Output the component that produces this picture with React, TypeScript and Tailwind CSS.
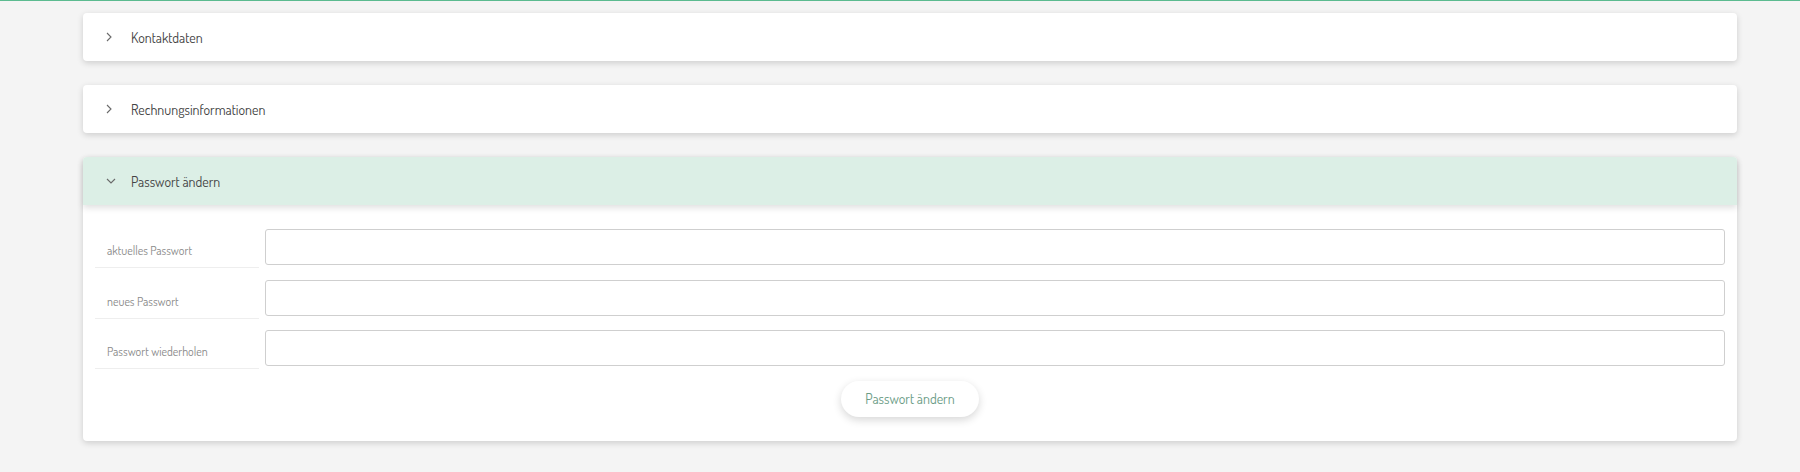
import React from "react";

const FONT = '"Dosis","Liberation Sans Narrow","Roboto Condensed","DejaVu Sans Condensed",Roboto,sans-serif';

function Chevron({ open }: { open?: boolean }) {
  return (
    <svg width="12" height="12" viewBox="0 0 12 12" className="shrink-0">
      {open ? (
        <path d="M3 4 L7 8 L11 4" fill="none" stroke="#6a6a6a" strokeWidth="1.1" />
      ) : (
        <path d="M3 2 L7 6 L3 10" fill="none" stroke="#6a6a6a" strokeWidth="1.1" />
      )}
    </svg>
  );
}

function Header({ title, open }: { title: string; open?: boolean }) {
  return (
    <div
      className={`h-[48px] flex items-center pl-[21px] rounded-t-[4px] ${
        open ? "bg-[#dcefe6] shadow-[0_3px_6px_rgba(0,0,0,0.12)] relative" : "rounded-b-[4px]"
      }`}
    >
      <Chevron open={open} />
      <span className="ml-[15px] text-[14px] text-[#444]">{title}</span>
    </div>
  );
}

function Row({ label }: { label: string }) {
  return (
    <div className="flex items-start mb-[11.5px]">
      <div className="w-[164px] h-[39px] border-b border-[#eeeeee] flex items-end pb-[7px] pl-[12px] text-[12px] text-[#8a8a8a]">
        {label}
      </div>
      <input
        type="password"
        className="ml-[6px] flex-1 h-[36px] border border-[#cfcfcf] rounded-[3px] bg-white outline-none"
      />
    </div>
  );
}

export default function App() {
  return (
    <div className="min-h-[472px] bg-[#f4f4f4] border-t border-[#5cbb90]" style={{ fontFamily: FONT }}>
      <div className="ml-[83px] w-[1654px] pt-[12px] flex flex-col gap-[24px]">
        <div className="bg-white rounded-[4px] shadow-[0_2px_6px_rgba(0,0,0,0.16)]">
          <Header title="Kontaktdaten" />
        </div>
        <div className="bg-white rounded-[4px] shadow-[0_2px_6px_rgba(0,0,0,0.16)]">
          <Header title="Rechnungsinformationen" />
        </div>
        <div className="bg-white rounded-[4px] shadow-[0_2px_6px_rgba(0,0,0,0.16)]">
          <Header title="Passwort ändern" open />
          <div className="px-[12px] pt-[24px] pb-[24px]">
            <Row label="aktuelles Passwort" />
            <Row label="neues Passwort" />
            <Row label="Passwort wiederholen" />
            <div className="flex justify-center">
              <button className="w-[138px] h-[36px] rounded-full bg-white shadow-[0_3px_8px_rgba(0,0,0,0.16)] text-[14px] text-[#6b9c86]">
                Passwort ändern
              </button>
            </div>
          </div>
        </div>
      </div>
    </div>
  );
}
